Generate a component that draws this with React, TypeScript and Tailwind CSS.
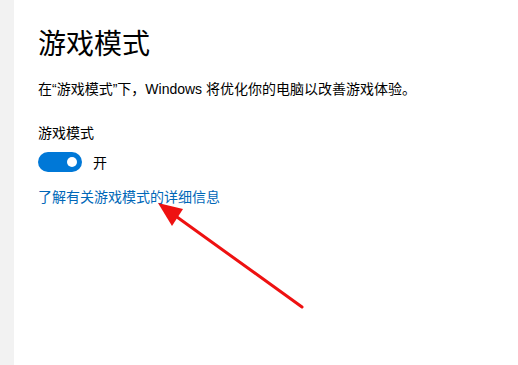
import React from "react";

export default function App() {
  return (
    <div
      className="relative flex h-[365px] w-[518px] overflow-hidden bg-white"
      style={{ fontFamily: '"Noto Sans CJK SC", "Noto Sans", sans-serif' }}
    >
      <div className="h-full w-[14px] shrink-0 bg-[#f2f2f2]" />
      <div className="flex flex-col pl-[24px] pt-[22px]">
        <h1 className="text-[28px] leading-[40px] font-normal text-black">游戏模式</h1>
        <p
          className="mt-[17px] text-[14px] leading-[20px] text-black"
          style={{ fontFamily: '"Liberation Sans", "Noto Sans CJK SC", sans-serif' }}
        >
          在“游戏模式”下，Windows 将优化你的电脑以改善游戏体验。
        </p>
        <div className="mt-[23px] text-[14px] leading-[20px] text-black">游戏模式</div>
        <div className="mt-[10px] flex items-center gap-[11px]">
          <div className="flex h-[20px] w-[44px] items-center justify-end rounded-full bg-[#0078d7] pr-[5px]">
            <div className="h-[10px] w-[10px] rounded-full bg-white" />
          </div>
          <span className="text-[14px] leading-[20px] text-black">开</span>
        </div>
        <a className="mt-[14px] text-[14px] leading-[20px] text-[#0067b8]">
          了解有关游戏模式的详细信息
        </a>
      </div>
      <svg
        className="pointer-events-none absolute left-0 top-0"
        width="518"
        height="365"
        viewBox="0 0 518 365"
      >
        <line x1="302" y1="307" x2="170" y2="212" stroke="#ee1111" strokeWidth="3" strokeLinecap="round" />
        <polygon points="158,203 183,209 172,226" fill="#ee1111" />
      </svg>
    </div>
  );
}
